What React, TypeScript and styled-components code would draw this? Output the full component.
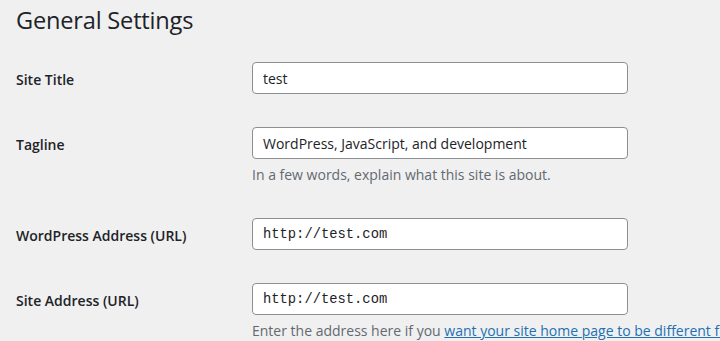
import React from 'react';
import styled, { createGlobalStyle } from 'styled-components';

const GlobalStyle = createGlobalStyle`
  html, body {
    margin: 0;
    padding: 0;
    background: #f0f0f1;
  }
  body {
    font-family: "Open Sans", "Noto Sans", sans-serif;
    color: #1d2327;
  }
`;

const Page = styled.div`
  padding: 0 0 0 16px;
  width: 704px;
  overflow: hidden;
`;

const Heading = styled.h1`
  margin: 0;
  padding-top: 3px;
  height: 59px;
  font-size: 23.6px;
  font-weight: 400;
  line-height: 34px;
  letter-spacing: -0.2px;
`;

const Form = styled.div`
  display: flex;
  flex-direction: column;
  gap: 33px;
`;

const Row = styled.div`
  display: grid;
  grid-template-columns: 236px 376px;
  row-gap: 6px;
`;

const Label = styled.label`
  grid-column: 1;
  align-self: center;
  padding-top: 3px;
  font-size: 14px;
  font-weight: 600;
  line-height: 20px;
`;

const Input = styled.input<{ $mono?: boolean }>`
  grid-column: 2;
  box-sizing: border-box;
  width: 376px;
  height: 32px;
  margin: 0;
  padding: 0 10px;
  border: 1px solid #8c8f94;
  border-radius: 4px;
  background: #fff;
  color: #1d2327;
  font-family: ${p => (p.$mono ? '"Liberation Mono", "DejaVu Sans Mono", monospace' : '"Open Sans", "Noto Sans", sans-serif')};
  font-size: ${p => (p.$mono ? '13.8px' : '14px')};
  outline: none;
`;

const Description = styled.p`
  grid-column: 2;
  margin: 0;
  white-space: nowrap;
  font-size: 14px;
  line-height: 20px;
  color: #646970;

  a {
    color: #2271b1;
    text-decoration: underline;
  }
`;

const App: React.FC = () => {
  return (
    <Page>
      <GlobalStyle />
      <Heading>General Settings</Heading>
      <Form>
        <Row>
          <Label>Site Title</Label>
          <Input defaultValue="test" />
        </Row>
        <Row>
          <Label>Tagline</Label>
          <Input defaultValue="WordPress, JavaScript, and development" />
          <Description>In a few words, explain what this site is about.</Description>
        </Row>
        <Row>
          <Label>WordPress Address (URL)</Label>
          <Input $mono defaultValue="http://test.com" />
        </Row>
        <Row>
          <Label>Site Address (URL)</Label>
          <Input $mono defaultValue="http://test.com" />
          <Description>
            Enter the address here if you <a href="#">want your site home page to be different from your WordPress installation directory</a>.
          </Description>
        </Row>
      </Form>
    </Page>
  );
};

export default App;
